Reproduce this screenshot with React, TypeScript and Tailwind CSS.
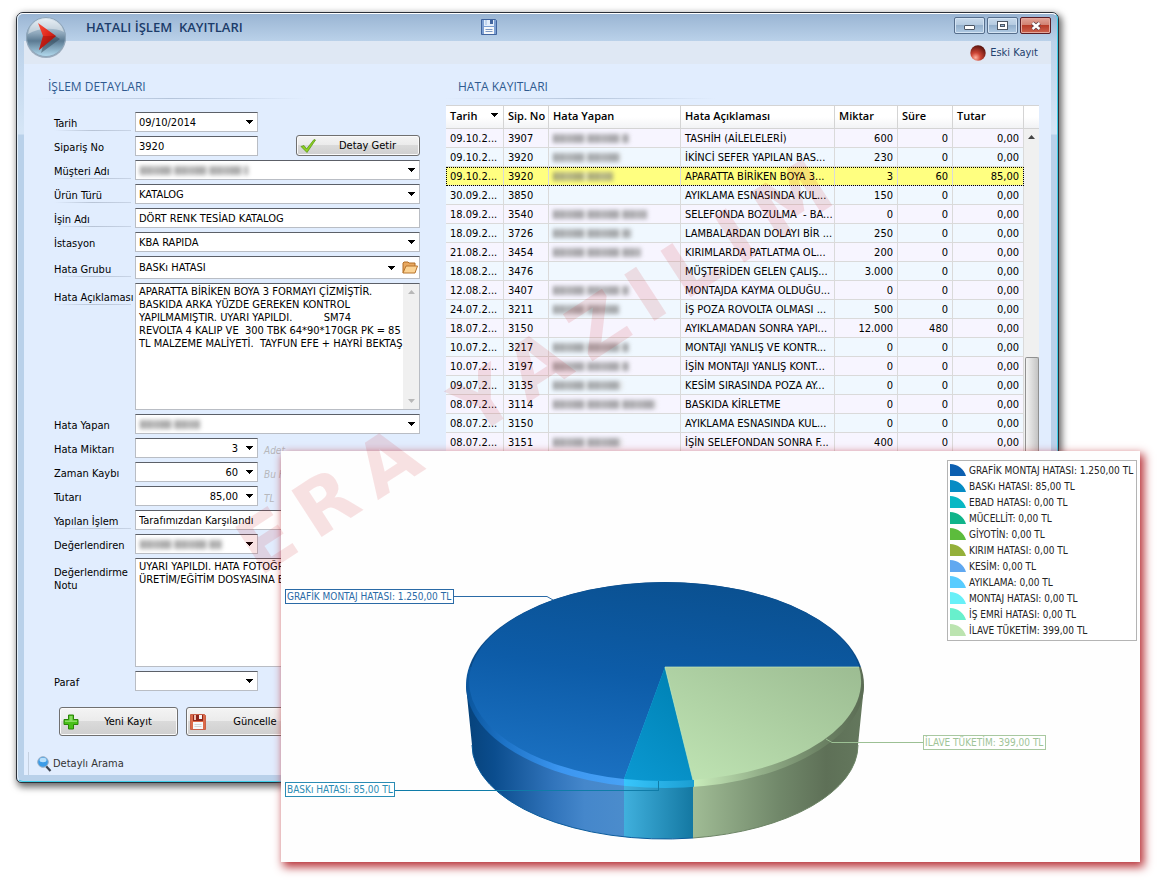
import type { ReactNode } from "react"

type Row = {
    date: string
    no: string
    who: number
    text: string
    qty: string
    time: string
    cost: string
}

// `who` is the width of the redacted name, 0 when nobody is assigned
const rows: Row[] = [
    { date: "09.10.2...", no: "3907", who: 76, text: "TASHİH (AİLELELERİ)", qty: "600", time: "0", cost: "0,00" },
    { date: "09.10.2...", no: "3920", who: 68, text: "İKİNCİ SEFER YAPILAN BAS...", qty: "230", time: "0", cost: "0,00" },
    { date: "09.10.2...", no: "3920", who: 60, text: "APARATTA BİRİKEN BOYA 3...", qty: "3", time: "60", cost: "85,00" },
    { date: "30.09.2...", no: "3850", who: 0, text: "AYIKLAMA ESNASINDA KUL...", qty: "150", time: "0", cost: "0,00" },
    { date: "18.09.2...", no: "3540", who: 94, text: "SELEFONDA BOZULMA  - BA...", qty: "0", time: "0", cost: "0,00" },
    { date: "18.09.2...", no: "3726", who: 78, text: "LAMBALARDAN DOLAYI BİR ...", qty: "250", time: "0", cost: "0,00" },
    { date: "21.08.2...", no: "3454", who: 88, text: "KIRIMLARDA PATLATMA OL...", qty: "200", time: "0", cost: "0,00" },
    { date: "18.08.2...", no: "3476", who: 0, text: "MÜŞTERİDEN GELEN ÇALIŞ...", qty: "3.000", time: "0", cost: "0,00" },
    { date: "12.08.2...", no: "3407", who: 76, text: "MONTAJDA KAYMA OLDUĞU...", qty: "0", time: "0", cost: "0,00" },
    { date: "24.07.2...", no: "3211", who: 66, text: "İŞ POZA ROVOLTA OLMASI ...", qty: "500", time: "0", cost: "0,00" },
    { date: "18.07.2...", no: "3150", who: 0, text: "AYIKLAMADAN SONRA YAPI...", qty: "12.000", time: "480", cost: "0,00" },
    { date: "10.07.2...", no: "3217", who: 76, text: "MONTAJI YANLIŞ VE KONTR...", qty: "0", time: "0", cost: "0,00" },
    { date: "10.07.2...", no: "3197", who: 76, text: "İŞİN MONTAJI YANLIŞ KONT...", qty: "0", time: "0", cost: "0,00" },
    { date: "09.07.2...", no: "3135", who: 70, text: "KESİM SIRASINDA POZA AY...", qty: "0", time: "0", cost: "0,00" },
    { date: "08.07.2...", no: "3114", who: 104, text: "BASKIDA KİRLETME", qty: "0", time: "0", cost: "0,00" },
    { date: "08.07.2...", no: "3150", who: 0, text: "AYIKLAMA ESNASINDA KUL...", qty: "0", time: "0", cost: "0,00" },
    { date: "08.07.2...", no: "3151", who: 70, text: "İŞİN SELEFONDAN SONRA F...", qty: "400", time: "0", cost: "0,00" },
]

const legend = [
    { label: "GRAFİK MONTAJ HATASI: 1.250,00 TL", color: "#0c5fb0" },
    { label: "BASKı HATASI: 85,00 TL", color: "#068cc4" },
    { label: "EBAD HATASI: 0,00 TL", color: "#08b8c4" },
    { label: "MÜCELLİT: 0,00 TL", color: "#10b48a" },
    { label: "GİYOTİN: 0,00 TL", color: "#5cbc3c" },
    { label: "KIRIM HATASI: 0,00 TL", color: "#94b03a" },
    { label: "KESİM: 0,00 TL", color: "#60a8f0" },
    { label: "AYIKLAMA: 0,00 TL", color: "#58ccff" },
    { label: "MONTAJ HATASI: 0,00 TL", color: "#68f0f8" },
    { label: "İŞ EMRİ HATASI: 0,00 TL", color: "#68f0cc" },
    { label: "İLAVE TÜKETİM: 399,00 TL", color: "#bce4b0" },
]

const boxClass = "border border-[#b9bdc4] border-t-[#5c6068] bg-white"
const cellClass = "border-r border-b border-[#dadada] pr-1 pl-1 whitespace-pre overflow-hidden"

function Caret() {
    return (
        <svg width="7" height="4" viewBox="0 0 7 4" className="shrink-0" shapeRendering="crispEdges">
            <path d="M0 0h7L3.5 4z" fill="#000" />
        </svg>
    )
}

function Smudge({ width }: { width: number }) {
    return (
        <span
            className="block h-[9px] blur-[2px] bg-[repeating-linear-gradient(90deg,#666_0_4px,#999_4px_6px,#777_6px_11px,#999_11px_13px,#888_13px_21px,#777_21px_31px,#ddd_31px_35px)] opacity-60"
            style={{ width }}
        />
    )
}

function Field({ id, label, line, tall, children }: { id: string; label: string; line?: boolean; tall?: boolean; children: ReactNode }) {
    return (
        <div className={`flex ${tall ? "items-start" : "items-center"}`}>
            <div className={`w-[81px] shrink-0 ${tall ? "pt-2" : "pt-1"}`}>
                <label htmlFor={id} className="block leading-[13px] whitespace-pre">{label}</label>
                <div className={`mr-1 h-px bg-linear-to-r ${line ? "from-transparent via-[#b8c4d6] to-[#c8d4e6]" : ""}`} />
            </div>
            {children}
        </div>
    )
}

function Combo({ id, value, wide, smudge, children }: { id: string; value?: string; wide?: boolean; smudge?: number; children?: ReactNode }) {
    return (
        <div className={`relative flex items-center ${wide ? "flex-1" : "w-[123px]"} ${children ? "h-[23px]" : "h-5"} ${boxClass}`}>
            <select id={id} className="h-full w-full appearance-none bg-transparent pl-[3px] outline-none">
                <option>{value}</option>
            </select>
            {smudge && (
                <span className="pointer-events-none absolute left-1">
                    <Smudge width={smudge} />
                </span>
            )}
            <span className={`pointer-events-none absolute ${children ? "right-6" : "right-1"}`}>
                <Caret />
            </span>
            {children}
        </div>
    )
}

function NumberBox({ id, value, unit }: { id: string; value: string; unit: string }) {
    return (
        <>
            <div className={`flex h-5 w-[123px] items-center pr-1 ${boxClass}`}>
                <input id={id} defaultValue={value} className="w-full min-w-0 pr-2 text-right outline-none" />
                <Caret />
            </div>
            <span className="pt-1 pl-[6px] text-[10px] text-[#b6b8bc] italic">{unit}</span>
        </>
    )
}

function GlassButton({ className, icon, children }: { className: string; icon: ReactNode; children: ReactNode }) {
    return (
        <button
            className={`flex items-center rounded-[3px] border border-[#707070] bg-[linear-gradient(#f4f4f4_0%,#ebebeb_48%,#dadada_50%,#cfcfcf_100%)] pl-[3px] shadow-[inset_0_0_0_1px_#fafafa] ${className}`}
        >
            {icon}
            <span className="flex-1 text-center">{children}</span>
        </button>
    )
}

function SectionTitle({ children }: { children: ReactNode }) {
    return (
        <div>
            <h2 className="pl-3 font-['Open_Sans','Noto_Sans',sans-serif] text-[12px] leading-4 font-medium text-[#2f5a90]">{children}</h2>
            <div className="mt-[3px] h-px w-[270px] bg-linear-to-r from-transparent via-[#b4c4da] to-transparent" />
        </div>
    )
}

function OrbIcon() {
    return (
        <svg width="44" height="44" viewBox="0 0 44 44">
            <defs>
                <linearGradient id="orb" x1="0" y1="0" x2="0" y2="1">
                    <stop offset="0" stopColor="#dde8f1" />
                    <stop offset=".4" stopColor="#8fa8bc" />
                    <stop offset=".6" stopColor="#5b7a92" />
                    <stop offset="1" stopColor="#b4dcf0" />
                </linearGradient>
                <linearGradient id="arrow" x1="0" y1="0" x2="1" y2="1">
                    <stop offset="0" stopColor="#f8503c" />
                    <stop offset=".5" stopColor="#e0261a" />
                    <stop offset="1" stopColor="#8c0d08" />
                </linearGradient>
            </defs>
            <circle cx="22" cy="23" r="20" fill="#5c7389" opacity=".5" />
            <circle cx="22" cy="22" r="19.5" fill="url(#orb)" stroke="#8fa6ba" />
            <path d="M4 19C6 8 14 4 22 4s16 5 18 13C30 12 14 13 4 19z" fill="#fff" opacity=".4" />
            <path d="M17 12l19 12-19 14 4-14z" fill="#2b3d4c" opacity=".45" />
            <path d="M14 8l18 13L15 35l4-14z" fill="url(#arrow)" />
            <path d="M19 21h13L15 35z" fill="#9a120b" opacity=".45" />
        </svg>
    )
}

function DiskIcon({ red }: { red?: boolean }) {
    return (
        <svg width="16" height="16" viewBox="0 0 16 16">
            <path d="M.5.500h14l1 1v14H.5z" fill={red ? "#dc6a48" : "#7c9fd2"} stroke={red ? "#c86048" : "#41649e"} />
            <rect x="3" y="1" width="10" height="6" fill={red ? "#8c241a" : "#e4eefb"} />
            <rect x="4" y="1" width="2" height="5" fill={red ? "#f0c0b0" : "#c0d4ee"} />
            <rect x="9" y="1" width="3" height="4" fill={red ? "#f4f4f4" : "#41649e"} />
            <rect x="3" y="8" width="10" height="7" fill="#f6f8fa" />
            <path d="M4.500 10.500h7M4.500 12.500h7" stroke={red ? "#d4d4d4" : "#7c98c4"} />
        </svg>
    )
}

function PieChart() {
    return (
        <svg viewBox="281 451 859 411" className="block w-full">
            <defs>
                <linearGradient id="sideBlue">
                    <stop offset="0" stopColor="#06427a" />
                    <stop offset=".18" stopColor="#0b4d8e" />
                    <stop offset=".55" stopColor="#3174bb" />
                    <stop offset=".75" stopColor="#4587cb" />
                    <stop offset="1" stopColor="#4b8ccc" />
                </linearGradient>
                <linearGradient id="sideCyan">
                    <stop offset="0" stopColor="#40b0dd" />
                    <stop offset="1" stopColor="#1478a2" />
                </linearGradient>
                <linearGradient id="sideGreen">
                    <stop offset="0" stopColor="#a0bc95" />
                    <stop offset=".5" stopColor="#71886a" />
                    <stop offset=".78" stopColor="#5e7057" />
                    <stop offset="1" stopColor="#64785d" />
                </linearGradient>
                <linearGradient id="rimBlue">
                    <stop offset="0" stopColor="#0a559c" />
                    <stop offset=".25" stopColor="#1e74c8" />
                    <stop offset=".6" stopColor="#3c96f0" />
                    <stop offset="1" stopColor="#48a2f6" />
                </linearGradient>
                <linearGradient id="rimCyan">
                    <stop offset="0" stopColor="#38c6fc" />
                    <stop offset="1" stopColor="#1b9ed2" />
                </linearGradient>
                <linearGradient id="rimGreen">
                    <stop offset="0" stopColor="#c8ecba" />
                    <stop offset=".4" stopColor="#92ae88" />
                    <stop offset=".75" stopColor="#6c8264" />
                    <stop offset="1" stopColor="#5b6c54" />
                </linearGradient>
                <linearGradient id="faceBlue" x1=".35" y1="1" x2=".65" y2="0">
                    <stop offset="0" stopColor="#1b71c2" />
                    <stop offset=".5" stopColor="#0d5ca8" />
                    <stop offset="1" stopColor="#0a5090" />
                </linearGradient>
                <linearGradient id="faceCyan" x1="0" y1="1" x2=".5" y2="0">
                    <stop offset="0" stopColor="#0b99d2" />
                    <stop offset="1" stopColor="#0083b6" />
                </linearGradient>
                <linearGradient id="faceGreen" x1="0" y1="1" x2="1" y2="0">
                    <stop offset="0" stopColor="#c0e5b4" />
                    <stop offset="1" stopColor="#9cbc92" />
                </linearGradient>
                <clipPath id="body">
                    <path d="M466 686L472 745A193 94 0 0 0 858 745L864 686z" />
                </clipPath>
                <clipPath id="rim">
                    <ellipse cx="665" cy="685" rx="199" ry="103" />
                </clipPath>
            </defs>

            <g clipPath="url(#body)">
                <rect x="466" y="680" width="158" height="160" fill="url(#sideBlue)" />
                <rect x="624" y="680" width="69" height="160" fill="url(#sideCyan)" />
                <rect x="693" y="680" width="171" height="160" fill="url(#sideGreen)" />
            </g>
            <path d="M472 745A193 94 0 0 0 693 838" fill="none" stroke="#0c5c9c" />
            <path d="M693 838A193 94 0 0 0 858 745" fill="none" stroke="#6d8566" />
            <g clipPath="url(#rim)">
                <rect x="466" y="580" width="400" height="88" fill="#0a4a88" />
                <rect x="466" y="667" width="158" height="122" fill="url(#rimBlue)" />
                <rect x="624" y="667" width="70" height="122" fill="url(#rimCyan)" />
                <rect x="694" y="667" width="170" height="122" fill="url(#rimGreen)" />
            </g>
            <path d="M665 667L624 779A196 99.500 0 1 1 859 667z" fill="url(#faceBlue)" />
            <path d="M665 667L624 779A196 99.500 0 0 0 693 780z" fill="url(#faceCyan)" />
            <path d="M665 667L693 780A196 99.500 0 0 0 859 667z" fill="url(#faceGreen)" />
            <path d="M859 667H665L693 780" fill="none" stroke="#c4e8b8" strokeOpacity=".7" />

            <g fill="none" shapeRendering="crispEdges">
                <path d="M453 596.500H547" stroke="#2a6aa6" />
                <rect x="285.500" y="589.500" width="168" height="14" fill="#fff" stroke="#2a6aa6" />
                <path d="M394 790.500H658.500V781" stroke="#0f7ca8" />
                <rect x="285.500" y="782.500" width="109" height="14" fill="#fff" stroke="#2a8cb4" />
                <path d="M832 742.500H923" stroke="#9cc094" />
                <rect x="923.500" y="735.500" width="122" height="14" fill="#fff" stroke="#a8c8a0" />
            </g>
            <path d="M547 596.500L553 600" stroke="#2a6aa6" />
            <path d="M832 742.500L826 739" stroke="#9cc094" />
            <g className="text-[10px]">
                <text x="287" y="600" fill="#2a6aa6">GRAFİK MONTAJ HATASI: 1.250,00 TL</text>
                <text x="287" y="793" fill="#2a8cb4">BASKı HATASI: 85,00 TL</text>
                <text x="925" y="746" fill="#a0c498">İLAVE TÜKETİM: 399,00 TL</text>
            </g>
        </svg>
    )
}

export default function App() {
    return (
        <div className="relative min-h-screen overflow-hidden bg-white pt-3 pr-[101px] pb-[98px] pl-4 font-['DejaVu_Sans_Condensed','Noto_Sans',sans-serif] text-[11px] leading-[13px] text-black">
            <main className="rounded-t-[7px] rounded-b-[5px] border border-[#2b3038] bg-[#b9d1ea] shadow-[2px_3px_7px_1px_rgba(0,0,0,0.6)]">
                <div className="rounded-[6px] border border-t-white border-r-[#3fd0ea] border-b-[#3fd0ea] border-l-[#e6f2fc] bg-[linear-gradient(#9ab5d3_0px,#bbd2ea_28px,#d5e5f6_115px,#d5e5f6_120px,#b9d1ea_121px)] px-[6px] pb-[6px]">
                    {/* Title bar */}
                    <header className="flex h-[27px] items-start">
                        <div className="relative z-10 -mb-4 pt-px">
                            <OrbIcon />
                        </div>
                        <h1 className="w-[413px] pt-[5px] pl-[18px] font-['Open_Sans','Noto_Sans',sans-serif] text-[13px] leading-4 font-semibold whitespace-pre text-[#1c3c6a]">HATALI İŞLEM  KAYITLARI</h1>
                        <button aria-label="Kaydet" className="mt-[5px]">
                            <DiskIcon />
                        </button>
                        <div className="ml-auto flex gap-[2px] pt-[3px]">
                            <button aria-label="Küçült" className="flex h-[17px] w-[31px] items-center justify-center rounded-[2px] border border-[#566e8c] bg-[linear-gradient(#c8daec_0%,#b4cae0_48%,#94b0cc_50%,#b0cae4_100%)] shadow-[inset_0_0_0_1px_#d4e4f4]">
                                <span className="mt-1 h-[5px] w-[11px] rounded-[1px] border border-[#4c5664] bg-white" />
                            </button>
                            <button aria-label="Büyüt" className="flex h-[17px] w-[31px] items-center justify-center rounded-[2px] border border-[#566e8c] bg-[linear-gradient(#c8daec_0%,#b4cae0_48%,#94b0cc_50%,#b0cae4_100%)] shadow-[inset_0_0_0_1px_#d4e4f4]">
                                <svg width="11" height="9" viewBox="0 0 11 9" shapeRendering="crispEdges">
                                    <rect x=".5" y=".5" width="10" height="8" fill="#fff" stroke="#4c5664" />
                                    <rect x="3.500" y="3.500" width="4" height="2" fill="#9ab5d3" stroke="#4c5664" />
                                </svg>
                            </button>
                            <button aria-label="Kapat" className="flex h-[17px] w-[31px] items-center justify-center rounded-[2px] border border-[#5c1c24] bg-[linear-gradient(#e2a498_0%,#d08070_48%,#b83c28_50%,#cc6450_100%)] shadow-[inset_0_0_0_1px_#e4a89c]">
                                <svg width="12" height="10" viewBox="0 0 12 10">
                                    <path d="M2.500 2l7 6M9.500 2l-7 6" stroke="#5a3a44" strokeWidth="4" />
                                    <path d="M2.500 2l7 6M9.500 2l-7 6" stroke="#fff" strokeWidth="2.400" />
                                </svg>
                            </button>
                        </div>
                    </header>

                    <div className="flex h-[23px] items-center justify-end gap-1 bg-[#dfe8f4] pr-[13px] text-[#24426e]">
                        <svg width="16" height="16" viewBox="0 0 16 16">
                            <defs>
                                <radialGradient id="ball" cx=".35" cy=".8" r=".8">
                                    <stop offset="0" stopColor="#ffb09c" />
                                    <stop offset=".4" stopColor="#cc4434" />
                                    <stop offset="1" stopColor="#5c140e" />
                                </radialGradient>
                            </defs>
                            <circle cx="8" cy="8" r="7.700" fill="url(#ball)" />
                        </svg>
                        <span>Eski Kayıt</span>
                    </div>

                    <div className="flex gap-[26px] bg-[#e1edfe] pt-[15px] pr-3">
                        {/* Record form */}
                        <form className="flex w-[396px] shrink-0 flex-col pl-[30px]">
                            <div className="-ml-[18px]">
                                <SectionTitle>İŞLEM DETAYLARI</SectionTitle>
                            </div>
                            <div className="mt-[13px] flex flex-col gap-1">
                                <Field id="tarih" label="Tarih" line>
                                    <Combo id="tarih" value="09/10/2014" />
                                </Field>
                                <Field id="siparis" label="Sipariş No">
                                    <input id="siparis" defaultValue="3920" className={`h-5 w-[123px] pl-[3px] outline-none ${boxClass}`} />
                                    <div className="relative flex-1">
                                        <GlassButton
                                            className="absolute -top-[11px] right-0 h-[21px] w-[124px]"
                                            icon={
                                                <svg width="16" height="14" viewBox="0 0 16 14">
                                                    <path d="M1 7.500l3-1 2.500 3.500L14 .5l1.500.5L7 13.500z" fill="#8fd020" stroke="#4f9010" strokeWidth=".7" />
                                                </svg>
                                            }
                                        >
                                            Detay Getir
                                        </GlassButton>
                                    </div>
                                </Field>
                                <Field id="musteri" label="Müşteri Adı" line>
                                    <Combo id="musteri" wide smudge={108} />
                                </Field>
                                <Field id="tur" label="Ürün Türü" line>
                                    <Combo id="tur" wide value="KATALOG" />
                                </Field>
                                <Field id="is" label="İşin Adı" line>
                                    <input id="is" defaultValue="DÖRT RENK TESİAD KATALOG" className={`h-5 flex-1 pl-[3px] outline-none ${boxClass}`} />
                                </Field>
                                <Field id="istasyon" label="İstasyon">
                                    <Combo id="istasyon" wide value="KBA RAPIDA" />
                                </Field>
                                <Field id="grup" label="Hata Grubu" line>
                                    <Combo id="grup" wide value="BASKı HATASI">
                                        <button type="button" aria-label="Aç" className="pr-px">
                                            <svg width="16" height="13" viewBox="0 0 16 13">
                                                <path d="M1 12V2l1-1h4l1 1h6v3" fill="#e8a860" stroke="#b06c24" />
                                                <path d="M1 12L4 5h11.500L13 12z" fill="#fbd394" stroke="#b8742c" />
                                            </svg>
                                        </button>
                                    </Combo>
                                </Field>
                                <Field id="aciklama" label="Hata Açıklaması" line tall>
                                    <div className={`flex h-[127px] flex-1 ${boxClass}`}>
                                        <textarea
                                            id="aciklama"
                                            className="flex-1 resize-none overflow-hidden pt-px pl-[3px] whitespace-pre outline-none"
                                            defaultValue={"APARATTA BİRİKEN BOYA 3 FORMAYI ÇİZMİŞTİR.\nBASKIDA ARKA YÜZDE GEREKEN KONTROL\nYAPILMAMIŞTIR. UYARI YAPILDI.          SM74\nREVOLTA 4 KALIP VE  300 TBK 64*90*170GR PK = 85\nTL MALZEME MALİYETİ.  TAYFUN EFE + HAYRİ BEKTAŞ"}
                                        />
                                        <div className="flex w-4 flex-col items-center justify-between bg-[#f0f0f0] py-[6px]">
                                            <svg width="7" height="4" viewBox="0 0 7 4"><path d="M0 4h7L3.500 0z" fill="#b8b8b8" /></svg>
                                            <svg width="7" height="4" viewBox="0 0 7 4"><path d="M0 0h7L3.500 4z" fill="#b8b8b8" /></svg>
                                        </div>
                                    </div>
                                </Field>
                                <Field id="yapan" label="Hata Yapan">
                                    <Combo id="yapan" wide smudge={60} />
                                </Field>
                                <Field id="miktar" label="Hata Miktarı">
                                    <NumberBox id="miktar" value="3" unit="Adet" />
                                </Field>
                                <Field id="zaman" label="Zaman Kaybı">
                                    <NumberBox id="zaman" value="60" unit="Bu Hata" />
                                </Field>
                                <Field id="tutar" label="Tutarı">
                                    <NumberBox id="tutar" value="85,00" unit="TL" />
                                </Field>
                                <Field id="islem" label="Yapılan İşlem" line>
                                    <Combo id="islem" wide value="Tarafımızdan Karşılandı" />
                                </Field>
                                <Field id="degerlendiren" label="Değerlendiren">
                                    <Combo id="degerlendiren" smudge={82} />
                                </Field>
                                <Field id="not" label={"Değerlendirme\nNotu"} tall>
                                    <textarea
                                        id="not"
                                        className={`h-[109px] flex-1 resize-none overflow-hidden pt-px pl-[3px] whitespace-pre outline-none ${boxClass}`}
                                        defaultValue={"UYARI YAPILDI. HATA FOTOĞRAFLARI\nÜRETİM/EĞİTİM DOSYASINA EKLENDİ."}
                                    />
                                </Field>
                                <Field id="paraf" label="Paraf">
                                    <Combo id="paraf" />
                                </Field>
                            </div>
                            <div className="mt-4 flex gap-2 pl-[5px]">
                                <GlassButton
                                    className="h-[29px] w-[119px]"
                                    icon={
                                        <svg width="16" height="16" viewBox="0 0 16 16">
                                            <path d="M5.500 1h5v4.500H15v5h-4.500V15h-5v-4.500H1v-5h4.500z" fill="#48c018" stroke="#2a8408" />
                                            <path d="M6.500 2h3v4.500H14V8H2V6.500h4.500z" fill="#a4e880" opacity=".7" />
                                        </svg>
                                    }
                                >
                                    Yeni Kayıt
                                </GlassButton>
                                <GlassButton className="h-[29px] w-[119px]" icon={<DiskIcon red />}>
                                    Güncelle
                                </GlassButton>
                            </div>
                            <a href="#arama" className="mt-4 -ml-[26px] flex h-[23px] items-center gap-px border-l border-[#c4d0e0] pl-2 text-[#333]">
                                <svg width="15" height="16" viewBox="0 0 15 16">
                                    <path d="M8 9l5.500 6" stroke="#3c4450" strokeWidth="2.200" />
                                    <circle cx="6" cy="6" r="5.300" fill="#3c9ce8" stroke="#9cb0c4" />
                                    <ellipse cx="6" cy="4" rx="3.500" ry="2.200" fill="#b8e0fc" />
                                </svg>
                                Detaylı Arama
                            </a>
                        </form>

                        {/* Error log */}
                        <section className="min-w-0 flex-1">
                            <SectionTitle>HATA KAYITLARI</SectionTitle>
                            <div className="mt-[6px] flex">
                                <table className="w-full min-w-0 table-fixed border-separate border-spacing-0">
                                    <colgroup>
                                        <col className="w-[58px]" />
                                        <col className="w-[45px]" />
                                        <col className="w-[132px]" />
                                        <col />
                                        <col className="w-[63px]" />
                                        <col className="w-[55px]" />
                                        <col className="w-[71px]" />
                                    </colgroup>
                                    <thead>
                                        <tr className="h-6 bg-linear-to-b from-white from-50% to-[#f1f2f4] text-left">
                                            {["Tarih", "Sip. No", "Hata Yapan", "Hata Açıklaması", "Miktar", "Süre", "Tutar"].map((name, i) => (
                                                <th key={name} className="border-t border-r border-b border-[#d4d4d4] pr-0 pb-1 pl-1 font-['Open_Sans','Noto_Sans',sans-serif] font-semibold whitespace-nowrap">
                                                    {i === 0 ? (
                                                        <span className="flex items-center justify-between pr-[5px]">{name}<Caret /></span>
                                                    ) : name}
                                                </th>
                                            ))}
                                        </tr>
                                    </thead>
                                    <tbody>
                                        {rows.map((row, i) => (
                                            <tr key={i} className={`h-[19px] ${i === 2 ? "bg-[#ffff80] outline outline-dotted outline-black -outline-offset-1" : i % 2 ? "bg-[#f0f8ff]" : "bg-[#f7f5ff]"}`}>
                                                <td className={cellClass}>{row.date}</td>
                                                <td className={cellClass}>{row.no}</td>
                                                <td className={cellClass}>{row.who > 0 && <Smudge width={row.who} />}</td>
                                                <td className={cellClass}>{row.text}</td>
                                                <td className={`text-right ${cellClass}`}>{row.qty}</td>
                                                <td className={`text-right ${cellClass}`}>{row.time}</td>
                                                <td className={`text-right ${cellClass}`}>{row.cost}</td>
                                            </tr>
                                        ))}
                                    </tbody>
                                </table>
                                <div className="flex w-[15px] shrink-0 flex-col items-center bg-[#f0f0f0]">
                                    <div className="h-6 w-full border-t border-b border-[#d4d4d4] bg-linear-to-b from-white from-50% to-[#f1f2f4]" />
                                    <svg width="7" height="4" viewBox="0 0 7 4" className="mt-[6px]"><path d="M0 4h7L3.500 0z" fill="#444" /></svg>
                                    <div className="mt-auto h-[95px] w-[14px] rounded-t-[2px] border border-b-0 border-[#909090] bg-linear-to-r from-[#f4f4f4] to-[#c4c4c4]" />
                                </div>
                            </div>
                        </section>
                    </div>
                </div>
            </main>

            {/* Cost breakdown, floats over the record window */}
            <aside className="absolute top-[451px] right-5 left-[281px] bg-[#fefefe] shadow-[3px_4px_9px_1px_#b83238]">
                <PieChart />
                <ul className="absolute top-[9px] right-[3px] w-[190px] border border-[#b4b4b4] bg-white pt-px pb-[2px] pl-[2px] text-[10px] text-[#222]">
                    {legend.map((item) => (
                        <li key={item.label} className="flex h-4 items-center gap-[3px]">
                            <svg width="16" height="12" viewBox="0 0 16 12" className="shrink-0">
                                <path d="M0 0C8 0 14 5 16 12H0z" fill={item.color} />
                            </svg>
                            <span className="whitespace-nowrap">{item.label}</span>
                        </li>
                    ))}
                </ul>
            </aside>

            <div className="pointer-events-none absolute top-[532px] left-[230px] origin-top-left -rotate-[33deg] font-['DejaVu_Sans',sans-serif] text-[76px] leading-[56px] font-bold tracking-[0.2em] whitespace-nowrap text-[#cc1c24] opacity-[0.12] select-none">
                ERA YAZILIM
            </div>
        </div>
    )
}
